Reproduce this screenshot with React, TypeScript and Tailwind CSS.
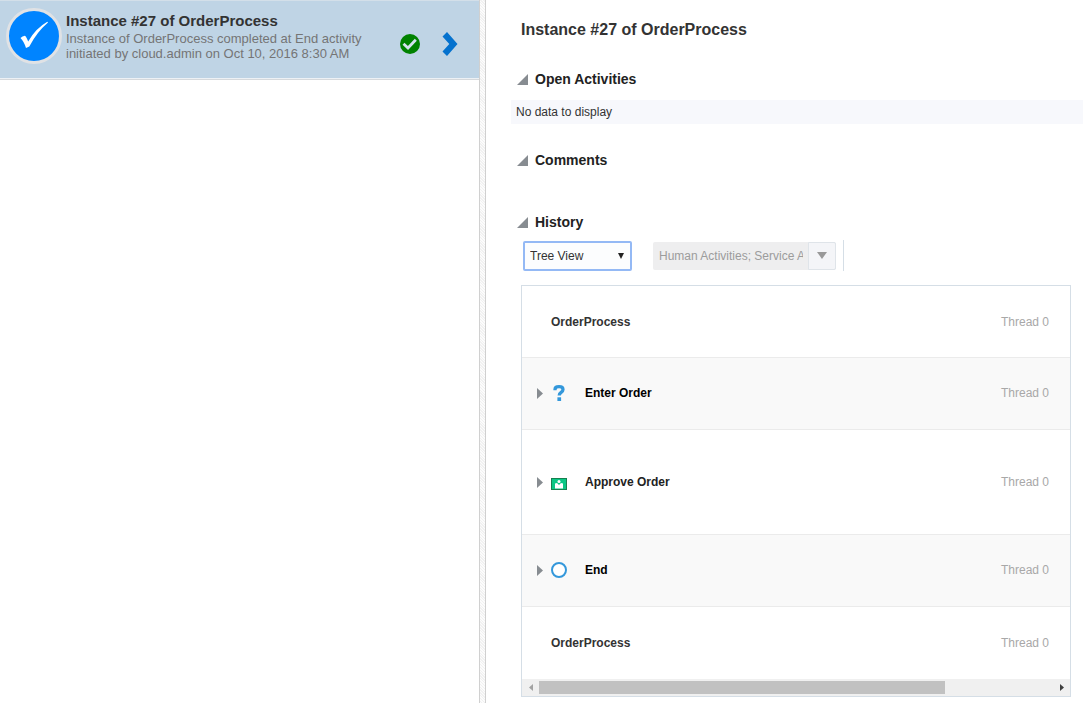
import { useState, type ReactNode } from "react";

type Step = {
  label: string;
  thread: string;
  kind: "process" | "question" | "human" | "end";
  tone: string;
  height: string;
};

const steps: Step[] = [
  { label: "OrderProcess", thread: "Thread 0", kind: "process", tone: "text-[#333333]", height: "h-18" },
  { label: "Enter Order", thread: "Thread 0", kind: "question", tone: "text-black", height: "h-18" },
  { label: "Approve Order", thread: "Thread 0", kind: "human", tone: "text-[#222222]", height: "h-[105px]" },
  { label: "End", thread: "Thread 0", kind: "end", tone: "text-black", height: "h-18" },
  { label: "OrderProcess", thread: "Thread 0", kind: "process", tone: "text-[#333333]", height: "h-18" },
];

function CheckBadge() {
  return (
    <svg viewBox="0 0 56 56" className="size-14 shrink-0" aria-hidden="true">
      <circle cx="28" cy="28" r="26.5" fill="#0084ff" stroke="#e0e2e5" strokeWidth="3" />
      <path
        d="M14.500 30 Q16.500 28 18.800 27.800 Q20.200 28.500 22.200 33.500 Q29.500 20.500 41.300 13.800 L42 14.600 Q31 24 23.300 38.500 L20 40 Q18 33.500 14.500 30 Z"
        fill="#ffffff"
      />
    </svg>
  );
}

function DoneIcon() {
  return (
    <svg viewBox="0 0 20 20" className="size-5" role="img" aria-label="Completed">
      <circle cx="10" cy="10" r="10" fill="#008200" />
      <path d="M3.500 9.800 L8 14 L15.800 5.800" fill="none" stroke="#d3e2ee" strokeWidth="2.800" />
    </svg>
  );
}

function ChevronIcon() {
  return (
    <svg viewBox="0 0 16 24" className="h-6 w-4" aria-hidden="true">
      <path d="M0.500 4.500 L5 0 L15.500 12 L5 24 L0.500 19.500 L7.300 12 Z" fill="#0572ce" />
    </svg>
  );
}

function StepIcon({ kind }: { kind: Step["kind"] }) {
  if (kind === "question") {
    return (
      <svg viewBox="0 0 16 16" className="size-4" aria-hidden="true">
        <path
          d="M4 5.200 V4.500 Q4 1.700 8 1.700 Q12 1.700 12 4.500 Q12 6.300 10 7.500 Q8.200 8.600 8.200 10.600"
          fill="none"
          stroke="#3498db"
          strokeWidth="3.300"
        />
        <rect x="6.400" y="12.300" width="3.700" height="3.700" fill="#3498db" />
      </svg>
    );
  }
  if (kind === "human") {
    return (
      <svg viewBox="0 0 16 16" className="size-4" aria-hidden="true">
        <rect x="0.500" y="4.500" width="15" height="11" fill="#0ac785" stroke="#17804f" />
        <circle cx="8" cy="7.500" r="1.500" fill="#ffffff" />
        <path d="M4 9.500 L6 9 L8 11 L10 9 L12 9.500 V14.500 H4 Z" fill="#ffffff" />
      </svg>
    );
  }
  return (
    <svg viewBox="0 0 16 16" className="size-4" aria-hidden="true">
      <circle cx="8" cy="8" r="7" fill="#ffffff" stroke="#3498db" strokeWidth="2" />
    </svg>
  );
}

function SectionHeader({ children }: { children: ReactNode }) {
  return (
    <h2 className="h-5 pl-[31px] text-sm/5 font-bold text-[#222222]">
      <button type="button" aria-expanded="true" className="flex items-center gap-[7px]">
        <svg viewBox="0 0 11 11" className="size-[11px]" aria-hidden="true">
          <path d="M11 0 V11 H0 Z" fill="#878c91" />
        </svg>
        {children}
      </button>
    </h2>
  );
}

function StepRow({ step }: { step: Step }) {
  const isProcess = step.kind === "process";
  return (
    <li
      className={`flex items-center border-b border-[#ebebeb] pr-[21px] pl-[15px] text-xs last:border-transparent even:bg-[#f9f9f9] even:pb-px ${step.height}`}
    >
      {isProcess ? (
        <span className="w-[14px]" />
      ) : (
        <>
          <button type="button" aria-label={`Expand ${step.label}`} className="w-[14px]">
            <svg viewBox="0 0 6 11" className="h-[11px] w-[6px]" aria-hidden="true">
              <path d="M0 0 L6 5.500 L0 11 Z" fill="#878c91" />
            </svg>
          </button>
          <span className="w-[34px]">
            <StepIcon kind={step.kind} />
          </span>
        </>
      )}
      <span className={`flex-1 font-bold ${step.tone}`}>{step.label}</span>
      <span className="text-[#a8a8a8]">{step.thread}</span>
    </li>
  );
}

export default function App() {
  const [view, setView] = useState("Tree View");

  return (
    <div className="flex min-h-screen bg-white font-['Liberation_Sans',Arial,sans-serif] text-[#333333]">
      <aside className="min-w-0 flex-[479_1_0%]">
        <div className="border-b border-[#d6d9dc]">
          <a
            href="#instance-27"
            className="flex h-[79px] items-start border-t border-b border-t-[#d3dfe9] border-b-[#edf1f5] bg-[#bfd4e5] pr-[21px] pl-1.5"
          >
            <span className="pt-[7px]">
              <CheckBadge />
            </span>
            <div className="min-w-0 flex-1 pt-[9px] pl-1">
              <div className="text-[15px]/[21px] font-bold">Instance #27 of OrderProcess</div>
              <div className="text-[13px]/[15px] text-[#757575]">
                Instance of OrderProcess completed at End activity
                <br />
                initiated by cloud.admin on Oct 10, 2016 8:30 AM
              </div>
            </div>
            <span className="flex items-center gap-[22px] pt-[31px]">
              <DoneIcon />
              <ChevronIcon />
            </span>
          </a>
        </div>
      </aside>

      <div
        role="separator"
        aria-orientation="vertical"
        className="w-[7px] shrink-0 border-x border-[#d0d0d0] bg-[repeating-linear-gradient(45deg,#fcfcfc_0_1px,#f1f1f1_1px_2px)]"
      />

      <main id="instance-27" className="min-w-0 flex-[597_1_0%]">
        <h1 className="pt-5 pl-[35px] text-base/5 font-bold">Instance #27 of OrderProcess</h1>

        <section className="pt-[29px]">
          <SectionHeader>Open Activities</SectionHeader>
          <p className="mt-[11px] ml-[25px] h-6 bg-[#f7f8fc] pl-[5px] text-xs/6">No data to display</p>
        </section>

        <section className="pt-[26px]">
          <SectionHeader>Comments</SectionHeader>
        </section>

        <section className="pt-[42px] pr-3 pb-1.5 pl-0">
          <SectionHeader>History</SectionHeader>

          <div className="mt-2 flex items-center pl-[37px]">
            <div className="grid h-[30px] w-[109px] items-center">
              <select
                aria-label="History view"
                value={view}
                onChange={(event) => setView(event.target.value)}
                className="col-start-1 row-start-1 h-[30px] w-full appearance-none rounded-xs border-2 border-[#94b9f5] bg-[#fcfdfe] pl-[5px] text-xs outline-none"
              >
                <option>Tree View</option>
                <option>List View</option>
                <option>Graphical View</option>
              </select>
              <svg
                viewBox="0 0 6 6"
                className="pointer-events-none col-start-1 row-start-1 mr-2 size-1.5 justify-self-end"
                aria-hidden="true"
              >
                <path d="M0 0 H6 L3 6 Z" fill="#222222" />
              </svg>
            </div>

            <div className="ml-[21px] flex h-7 w-[183px] rounded-xs bg-[#eeeeef]">
              <input
                type="text"
                aria-label="Activity filter"
                disabled
                value="Human Activities; Service Activities"
                readOnly
                className="mr-[5px] ml-1.5 min-w-0 flex-1 bg-transparent text-xs text-[#9c9c9c]"
              />
              <button
                type="button"
                disabled
                aria-label="Choose activities"
                className="grid w-7 place-items-center rounded-r-xs border border-[#dfe4e9] bg-[#f4f5f8]"
              >
                <svg viewBox="0 0 10 7" className="h-[7px] w-2.5" aria-hidden="true">
                  <path d="M0 0 H10 L5 7 Z" fill="#999999" />
                </svg>
              </button>
            </div>

            <div className="ml-[7px] h-[31px] w-px bg-[#d5dee6]" />
          </div>

          <div className="mt-[14px] ml-[35px] border border-[#d5dee6]">
            <ul>
              {steps.map((step, index) => (
                <StepRow key={index} step={step} />
              ))}
            </ul>
            <div className="flex h-[17px] items-center bg-[#f0f0f0]">
              <button type="button" aria-label="Scroll left" className="grid w-[17px] place-items-center">
                <svg viewBox="0 0 4 7" className="h-[7px] w-1" aria-hidden="true">
                  <path d="M4 0 V7 L0 3.500 Z" fill="#a3a3a3" />
                </svg>
              </button>
              <div className="h-[13px] flex-1">
                <div className="h-full w-[79%] bg-[#c1c1c1]" />
              </div>
              <button type="button" aria-label="Scroll right" className="grid w-[17px] place-items-center">
                <svg viewBox="0 0 4 7" className="h-[7px] w-1" aria-hidden="true">
                  <path d="M0 0 V7 L4 3.500 Z" fill="#404040" />
                </svg>
              </button>
            </div>
          </div>
        </section>
      </main>
    </div>
  );
}
